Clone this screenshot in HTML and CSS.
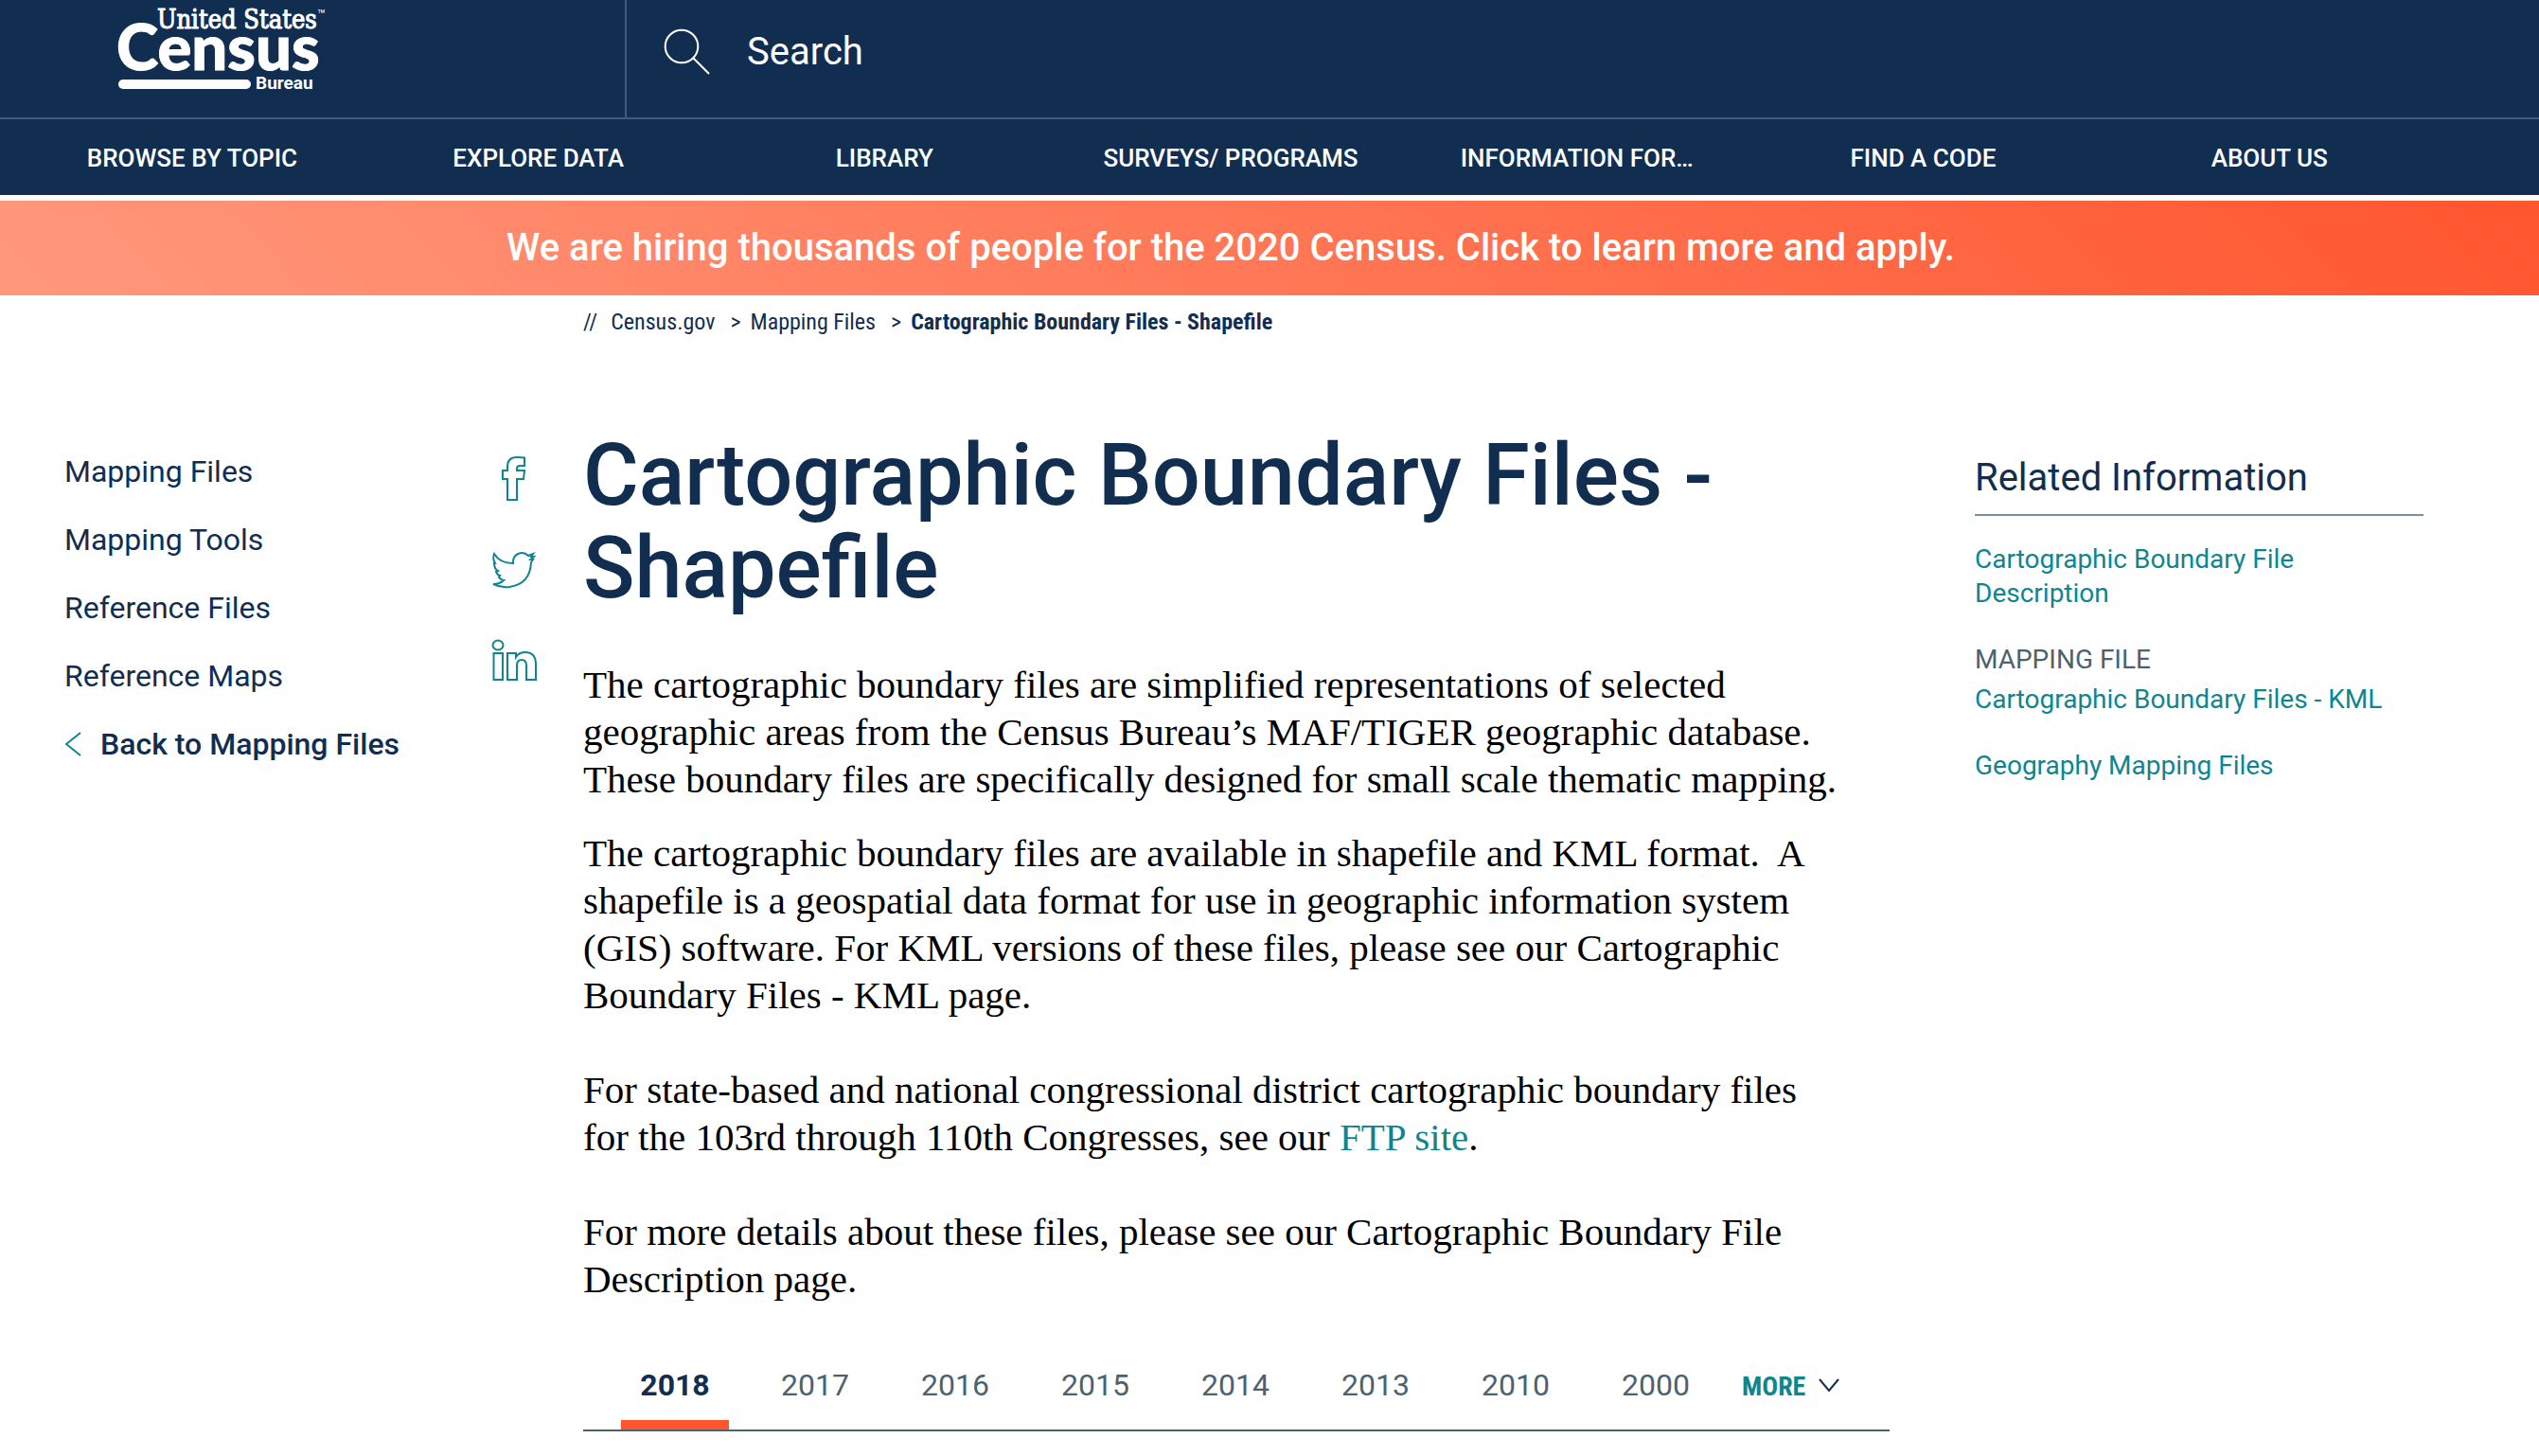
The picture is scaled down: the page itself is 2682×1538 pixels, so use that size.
FILE: index.html
```html
<!DOCTYPE html>
<html lang="en">
<head>
<meta charset="utf-8">
<title>Cartographic Boundary Files - Shapefile</title>
<link rel="stylesheet" href="styles.css">
</head>
<body>
<header class="site-header">
  <div class="masthead">
    <a class="logo" href="#" aria-label="United States Census Bureau">
      <svg width="240" height="100" viewBox="0 0 240 100">
        <text class="logo-top" x="46" y="30">United States</text>
        <text class="logo-tm" x="215" y="20">™</text>
        <text class="logo-main" x="3" y="74">Census</text>
        <rect x="5" y="84" width="140" height="10" rx="5"/>
        <text class="logo-sub" x="150" y="94">Bureau</text>
      </svg>
    </a>
    <form class="search" role="search">
      <label for="q" aria-label="Search">
        <svg class="search-icon" width="50" height="50" viewBox="0 0 50 50"><circle cx="19" cy="19" r="17.3"/><path d="M31 31 48 48"/></svg>
      </label>
      <input id="q" type="search" placeholder="Search">
    </form>
  </div>
  <nav class="main-nav">
    <a href="#">BROWSE BY TOPIC</a>
    <a href="#">EXPLORE DATA</a>
    <a href="#">LIBRARY</a>
    <a href="#">SURVEYS/ PROGRAMS</a>
    <a href="#">INFORMATION FOR…</a>
    <a href="#">FIND A CODE</a>
    <a href="#">ABOUT US</a>
  </nav>
</header>
<a class="banner" href="#">We are hiring thousands of people for the 2020 Census. Click to learn more and apply.</a>
<nav class="breadcrumb" aria-label="Breadcrumb">
  <span class="crumb-start">//</span>
  <a href="#">Census.gov</a>
  <span class="crumb-sep">&gt;</span>
  <a href="#">Mapping Files</a>
  <span class="crumb-sep">&gt;</span>
  <strong>Cartographic Boundary Files - Shapefile</strong>
</nav>
<div class="page">
  <nav class="side-nav">
    <a href="#">Mapping Files</a>
    <a href="#">Mapping Tools</a>
    <a href="#">Reference Files</a>
    <a href="#">Reference Maps</a>
    <a class="back" href="#"><svg width="18" height="28" viewBox="0 0 18 28"><path d="M17 2 2 14 17 26"/></svg>Back to Mapping Files</a>
  </nav>
  <div class="social">
    <a href="#" aria-label="Facebook"><svg width="50" height="50" viewBox="0 0 50 50"><path d="M18 47V25H13V16H18V12Q18 2 28 2Q32 2 36 2.500V11H31Q28 11 28 14V16H36L35 25H28V47Z"/></svg></a>
    <a href="#" aria-label="Twitter"><svg width="50" height="50" viewBox="0 0 50 50"><path d="M24 18Q10 18 4 8Q2 13 5 18L4 18Q4 24 8 26L6 27Q8 31 10 31L9 33Q12 36 14 36Q10 40 3 40Q11 44 20 43Q42 40 43 17L45 14L42.500 14L46 11L43 11L45 8L40 10C34 4 23 8 24 18Z"/></svg></a>
    <a href="#" aria-label="LinkedIn"><svg width="50" height="50" viewBox="0 0 50 50"><ellipse cx="8" cy="8.500" rx="5.500" ry="5"/><path d="M3.500 17H13V45H3.500ZM18 17H27V21Q30 16 37 16Q48 16 48 29V45H38V30Q38 24 33 24Q28 24 28 30V45H18Z"/></svg></a>
  </div>
  <main class="content">
    <h1>Cartographic Boundary Files - Shapefile</h1>
    <p>The cartographic boundary files are simplified representations of selected<br>geographic areas from the Census Bureau’s MAF/TIGER geographic database.<br>These boundary files are specifically designed for small scale thematic mapping.</p>
    <p>The cartographic boundary files are available in shapefile and KML format.&nbsp; A<br>shapefile is a geospatial data format for use in geographic information system<br>(GIS) software. For KML versions of these files, please see our Cartographic<br>Boundary Files - KML page.<br><br>For state-based and national congressional district cartographic boundary files<br>for the 103rd through 110th Congresses, see our <a href="#">FTP site</a>.<br><br>For more details about these files, please see our Cartographic Boundary File<br>Description page.</p>
    <div class="tabs" role="tablist">
      <button class="tab active" role="tab" aria-selected="true">2018</button>
      <button class="tab" role="tab">2017</button>
      <button class="tab" role="tab">2016</button>
      <button class="tab" role="tab">2015</button>
      <button class="tab" role="tab">2014</button>
      <button class="tab" role="tab">2013</button>
      <button class="tab" role="tab">2010</button>
      <button class="tab" role="tab">2000</button>
      <button class="more">MORE<svg width="22" height="16" viewBox="0 0 22 16"><path d="M1 1 11 13 21 1"/></svg></button>
    </div>
  </main>
  <aside class="related">
    <h2>Related Information</h2>
    <ul>
      <li><a href="#">Cartographic Boundary File Description</a></li>
      <li><span>MAPPING FILE</span><a href="#">Cartographic Boundary Files - KML</a></li>
      <li><a href="#">Geography Mapping Files</a></li>
    </ul>
  </aside>
</div>
</body>
</html>
```
FILE: styles.css
```css
:root {
  --navy: #112e51;
  --teal: #0f858f;
  --slate: #4b636e;
  --orange: #ff562f;
}
* { box-sizing: border-box; }
body {
  margin: 0;
  background: #fff;
  color: var(--navy);
  font-family: Roboto, "Liberation Sans", sans-serif;
  font-size: 32px;
}
a { color: inherit; text-decoration: none; }
button { border: 0; padding: 0; background: none; font: inherit; color: inherit; cursor: pointer; }
svg { display: block; fill: none; stroke: currentColor; stroke-width: 2; }

.site-header { background: var(--navy); color: #fff; }
.masthead { display: flex; height: 126px; border-bottom: 2px solid #41597a; }
.logo { width: 662px; padding-left: 120px; border-right: 2px solid #41597a; }
.logo svg { fill: #fff; stroke: none; }
.logo-top { font: 27px "DejaVu Serif Condensed", "DejaVu Serif", serif; stroke: #fff; stroke-width: 1; }
.logo-tm { font: 14px Roboto, sans-serif; }
.logo-main { font: 900 67px Lato, sans-serif; stroke: #fff; stroke-width: 1; }
.logo-sub { font: 700 19px Roboto, sans-serif; }
.search { display: flex; flex: 1; align-items: flex-start; gap: 38px; padding: 30px 40px 0 39px; }
.search-icon { color: #fff; }
.search input {
  flex: 1; height: 48px; padding: 0; border: 0; outline: 0; background: none;
  color: #fff; font: 40px Roboto, sans-serif;
}
.search input::placeholder { color: #fff; opacity: 1; }
.main-nav { display: flex; padding: 2px 102px 0 20px; }
.main-nav a { flex: 1 1 0; text-align: center; font-size: 26px; font-weight: 500; line-height: 78px; }

.banner {
  display: block; margin-top: 6px; padding: 0 102px 0 20px;
  background: linear-gradient(45deg, #ff987c, #ff562f);
  color: #fff; font-size: 40px; font-weight: 500; line-height: 100px; text-align: center;
}
.breadcrumb {
  display: flex; padding: 12px 68px 0 616px;
  font: 24px/32px "Roboto Condensed", "Liberation Sans Narrow", sans-serif;
}
.crumb-start { margin-right: 14px; }
.crumb-sep { margin: 0 10px 0 16px; }

.page {
  display: grid;
  grid-template-columns: 450px 98px minmax(0, 1fr) 474px;
  padding: 98px 122px 24px 68px;
}
.side-nav { padding-top: 8px; }
.side-nav a { display: block; line-height: 72px; }
.side-nav .back { display: flex; align-items: center; gap: 20px; font-weight: 500; }
.back svg { color: var(--teal); }
.social { display: grid; gap: 46px; align-content: start; padding-top: 27px; color: var(--teal); }
.content { margin-right: 90px; }
.content h1 { margin: 0 0 48px; font-size: 90px; font-weight: 500; line-height: 98px; }
.content p { margin: 0 0 28px; color: #000; font: 41px/50px "Liberation Serif", serif; white-space: nowrap; }
.content p a { color: var(--teal); }
.tabs { display: flex; gap: 34px; padding-left: 40px; margin-top: 50px; border-bottom: 2px solid var(--slate); }
.tab { width: 114px; height: 84px; border-bottom: 10px solid transparent; color: var(--slate); }
.tab.active { border-color: var(--orange); color: var(--navy); font-weight: 700; }
.more {
  display: flex; align-items: center; gap: 14px; height: 74px; padding-top: 2px;
  color: var(--teal); font: 700 28px "Roboto Condensed", "Liberation Sans Narrow", sans-serif;
}
.more svg { color: var(--navy); }

.related { padding-top: 27px; }
.related h2 { margin: 0 0 28px; padding-bottom: 14px; border-bottom: 2px solid #7890a0; font-size: 40px; font-weight: 400; line-height: 48px; }
.related ul { display: grid; gap: 34px; margin: 0; padding: 0; list-style: none; font-size: 28px; line-height: 36px; }
.related li { display: grid; gap: 6px; }
.related li:first-child { padding-right: 100px; }
.related a { color: var(--teal); }
.related span { color: var(--slate); }
```
